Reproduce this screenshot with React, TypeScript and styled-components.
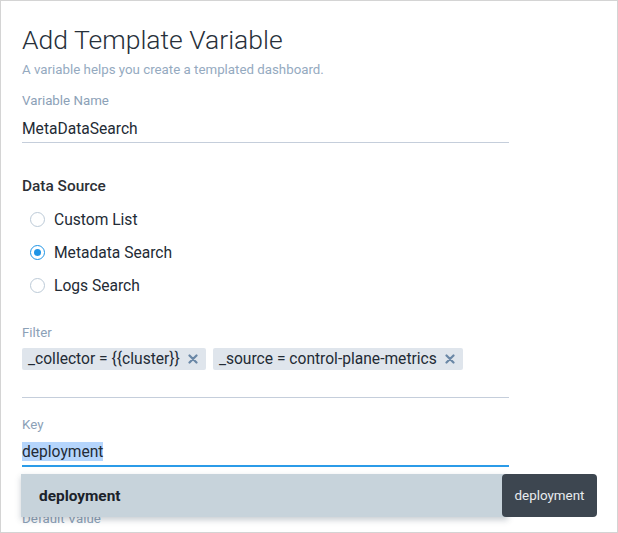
import { memo } from 'react';
import styled, { createGlobalStyle } from 'styled-components';

const GlobalStyle = createGlobalStyle`
  html, body {
    margin: 0;
    padding: 0;
    background: #ffffff;
  }
  body {
    font-family: Roboto, "Noto Sans", "Liberation Sans", sans-serif;
    color: #2a323c;
  }
`;

const radios = [
  { label: 'Custom List', checked: false },
  { label: 'Metadata Search', checked: true },
  { label: 'Logs Search', checked: false },
];

const filters = ['_collector = {{cluster}}', '_source = control-plane-metrics'];

function CloseIcon() {
  return (
    <svg width="10" height="10" viewBox="0 0 10 10">
      <path
        d="M1.5 1.5 L8.5 8.5 M8.5 1.5 L1.5 8.5"
        stroke="#6a87a6"
        strokeWidth="2.2"
        strokeLinecap="round"
      />
    </svg>
  );
}

function App() {
  return (
    <StylesPanel>
      <GlobalStyle />
      <Form>
        <Title>Add Template Variable</Title>
        <Subtitle>A variable helps you create a templated dashboard.</Subtitle>

        <Label $top={15}>Variable Name</Label>
        <InputLine>MetaDataSearch</InputLine>

        <SectionTitle>Data Source</SectionTitle>
        <RadioList>
          {radios.map((r) => (
            <RadioRow key={r.label}>
              <RadioCircle $checked={r.checked} />
              <span>{r.label}</span>
            </RadioRow>
          ))}
        </RadioList>

        <Label $top={23}>Filter</Label>
        <ChipField>
          {filters.map((f) => (
            <Chip key={f}>
              <span>{f}</span>
              <CloseIcon />
            </Chip>
          ))}
        </ChipField>

        <Label $top={19}>Key</Label>
        <KeyField>
          <Selected>deployment</Selected>
          <Dropdown>
            <DropdownItem>deployment</DropdownItem>
          </Dropdown>
          <Tooltip>deployment</Tooltip>
        </KeyField>

        <Label $top={44}>Default Value</Label>
      </Form>
    </StylesPanel>
  );
}

const StylesPanel = styled.div`
  width: 618px;
  height: 533px;
  box-sizing: border-box;
  border: 1px solid #d4d4d4;
  padding-left: 21px;
  overflow: hidden;
  background: #fff;
`;

const Form = styled.div`
  width: 487px;
  display: flex;
  flex-direction: column;
`;

const Title = styled.h1`
  margin: 23px 0 0;
  font-size: 26.5px;
  line-height: 32px;
  font-weight: 300;
  color: #27303a;
`;

const Subtitle = styled.p`
  margin: 6px 0 0;
  font-size: 13.3px;
  line-height: 16px;
  color: #95aabf;
`;

const Label = styled.div<{ $top: number }>`
  margin-top: ${(p) => p.$top}px;
  font-size: 13.3px;
  line-height: 16px;
  color: #8ca1b7;
`;

const InputLine = styled.div`
  margin-top: 10px;
  padding-bottom: 3px;
  font-size: 15.6px;
  line-height: 20px;
  color: #232b35;
  border-bottom: 1px solid #c5cedb;
`;

const SectionTitle = styled.div`
  margin-top: 34px;
  font-size: 15.4px;
  line-height: 18px;
  font-weight: 500;
  color: #2c3036;
`;

const RadioList = styled.div`
  margin-top: 8px;
  display: flex;
  flex-direction: column;
`;

const RadioRow = styled.div`
  height: 33px;
  display: flex;
  align-items: center;
  gap: 9px;
  padding-left: 8px;
  font-size: 15.6px;
  line-height: 20px;
  color: #232b35;
`;

const RadioCircle = styled.span<{ $checked: boolean }>`
  width: 15px;
  height: 15px;
  box-sizing: border-box;
  border-radius: 50%;
  border: 1.5px solid ${(p) => (p.$checked ? '#1e94e6' : '#bccad7')};
  display: flex;
  align-items: center;
  justify-content: center;
  &::after {
    content: '';
    width: 7px;
    height: 7px;
    border-radius: 50%;
    background: ${(p) => (p.$checked ? '#1e94e6' : 'transparent')};
  }
`;

const ChipField = styled.div`
  margin-top: 7px;
  padding-bottom: 27px;
  display: flex;
  gap: 7px;
  border-bottom: 1px solid #c5cedb;
`;

const Chip = styled.div`
  height: 22px;
  display: flex;
  align-items: center;
  gap: 8px;
  padding: 0 8px 0 6px;
  background: #dfe5ec;
  border-radius: 2px;
  font-size: 15.6px;
  color: #232b35;
`;

const KeyField = styled.div`
  position: relative;
  margin-top: 9px;
  padding-bottom: 3px;
  border-bottom: 2px solid #2b9be8;
  font-size: 15.6px;
  line-height: 20px;
`;

const Selected = styled.span`
  display: inline-block;
  line-height: 18px;
  padding-top: 1px;
  background: #b5d5fc;
  color: #232b35;
`;

const Dropdown = styled.div`
  position: absolute;
  top: calc(100% + 9px);
  left: -1px;
  width: 487px;
  height: 43px;
  background: #c7d3db;
  box-shadow: 0 3px 6px rgba(40, 60, 80, 0.25);
  display: flex;
  align-items: center;
  z-index: 1;
`;

const DropdownItem = styled.div`
  padding-left: 18px;
  font-size: 15.4px;
  font-weight: 700;
  color: #1b222a;
`;

const Tooltip = styled.div`
  position: absolute;
  top: calc(100% + 9px);
  left: 480px;
  width: 95px;
  height: 43px;
  box-sizing: border-box;
  background: #3d4650;
  border-radius: 4px;
  display: flex;
  align-items: center;
  justify-content: center;
  font-size: 13.4px;
  color: #e9ecef;
  z-index: 2;
`;

export default memo(App);
